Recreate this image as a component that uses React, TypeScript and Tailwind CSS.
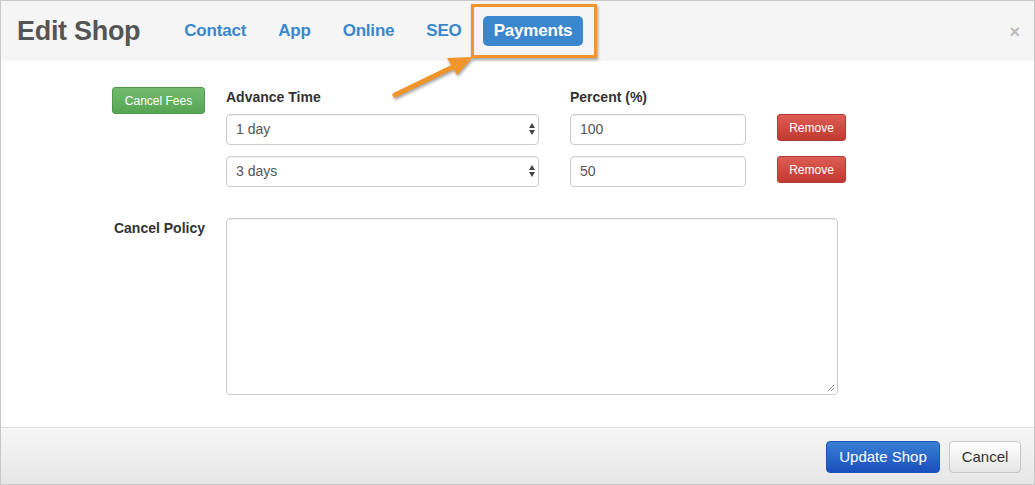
import React from 'react';

const Select = ({ value }: { value: string }) => (
  <div className="relative flex h-[31px] w-[313px] items-center rounded border border-[#ccc] bg-white pl-[9px] text-[14px] text-[#555] shadow-[inset_0_1px_1px_rgba(0,0,0,0.06)]">
    {value}
    <div className="absolute right-[3px] top-[8px] flex flex-col items-center gap-[2px]">
      <span className="h-0 w-0 border-x-[3.5px] border-b-[5px] border-x-transparent border-b-[#444]" />
      <span className="h-0 w-0 border-x-[3.5px] border-t-[5px] border-x-transparent border-t-[#444]" />
    </div>
  </div>
);

const PctInput = ({ value }: { value: string }) => (
  <div className="flex h-[31px] w-[176px] items-center rounded border border-[#ccc] bg-white pl-[9px] text-[14px] text-[#555] shadow-[inset_0_1px_1px_rgba(0,0,0,0.06)]">
    {value}
  </div>
);

const RemoveBtn = () => (
  <button className="h-[27px] w-[69px] rounded-[3px] border border-[#b33a32] bg-gradient-to-b from-[#dc5d55] to-[#c1392f] text-[12px] text-white">
    Remove
  </button>
);

export default function App() {
  const tabs = ['Contact', 'App', 'Online', 'SEO'];
  return (
    <div className="relative h-[485px] w-[1035px] overflow-hidden border border-[#c8c8c8] bg-white font-['Liberation_Sans',Arial,sans-serif]">
      {/* header */}
      <div className="flex h-[60px] items-center bg-[#f5f5f5] pl-[16px] pr-[14px]">
        <h1 className="text-[27px] font-bold tracking-[-0.3px] text-[#555]">Edit Shop</h1>
        <nav className="ml-[44px] flex items-center gap-[32px]">
          {tabs.map((t) => (
            <span key={t} className="text-[17px] font-bold tracking-[-0.2px] text-[#3a87cd]">
              {t}
            </span>
          ))}
          <div className="relative -ml-[11px]">
            <span className="flex h-[30px] items-center rounded-[5px] bg-[#3a87cd] px-[11px] text-[17px] font-bold tracking-[-0.2px] text-white">
              Payments
            </span>
            <div className="absolute -left-[12px] -top-[12px] h-[54px] w-[126px] border-[3px] border-[#f0952c] shadow-[1px_2px_3px_rgba(0,0,0,0.35)]" />
          </div>
        </nav>
        <span className="ml-auto pt-[2px] text-[18px] font-bold text-[#bbb]">×</span>
      </div>

      {/* arrow */}
      <svg className="absolute left-[386px] top-[48px]" width="95" height="55" viewBox="0 0 95 55">
        <g style={{ filter: 'drop-shadow(1px 2px 1.5px rgba(0,0,0,0.35))' }}>
          <line x1="8" y1="46" x2="70" y2="16" stroke="#f0952c" strokeWidth="5" strokeLinecap="round" />
          <polygon points="86,8 60,9 70,26" fill="#f0952c" />
        </g>
      </svg>

      {/* body */}
      <div className="h-[366px] pt-[26px]">
        <div className="flex">
          <div className="w-[204px] pl-[111px]">
            <button className="h-[27px] w-[93px] rounded-[3px] border border-[#4e9a4c] bg-gradient-to-b from-[#73bb6f] to-[#56a553] text-[12px] text-white">
              Cancel Fees
            </button>
          </div>
          <div className="ml-[21px] flex flex-col">
            <div className="flex text-[14px] font-bold text-[#333]">
              <span className="w-[344px]">Advance Time</span>
              <span>Percent (%)</span>
            </div>
            <div className="mt-[6px] flex flex-col gap-[11px]">
              {[
                ['1 day', '100'],
                ['3 days', '50'],
              ].map(([d, p]) => (
                <div key={d} className="flex items-start">
                  <Select value={d} />
                  <div className="ml-[31px]">
                    <PctInput value={p} />
                  </div>
                  <div className="ml-[31px]">
                    <RemoveBtn />
                  </div>
                </div>
              ))}
            </div>
          </div>
        </div>

        <div className="mt-[31px] flex">
          <div className="w-[204px] text-right text-[14px] font-bold text-[#333]">Cancel Policy</div>
          <div className="relative ml-[21px] h-[177px] w-[612px] rounded border border-[#ccc] bg-white shadow-[inset_0_1px_1px_rgba(0,0,0,0.06)]">
            <svg className="absolute bottom-[2px] right-[2px]" width="8" height="8" viewBox="0 0 8 8">
              <line x1="1" y1="7" x2="7" y2="1" stroke="#888" strokeWidth="1" />
              <line x1="4" y1="7" x2="7" y2="4" stroke="#888" strokeWidth="1" />
            </svg>
          </div>
        </div>
      </div>

      {/* footer */}
      <div className="flex h-[59px] items-center justify-end gap-[9px] border-t border-[#ddd] bg-gradient-to-b from-[#f6f6f6] to-[#e6e6e6] pr-[13px]">
        <button className="h-[32px] w-[114px] rounded-[4px] border border-[#1d56b5] bg-gradient-to-b from-[#3a7fd4] to-[#1a4fbd] text-[15px] text-white">
          Update Shop
        </button>
        <button className="h-[32px] w-[72px] rounded-[4px] border border-[#c6c6c6] bg-gradient-to-b from-white to-[#e6e6e6] text-[15px] text-[#333]">
          Cancel
        </button>
      </div>
    </div>
  );
}
